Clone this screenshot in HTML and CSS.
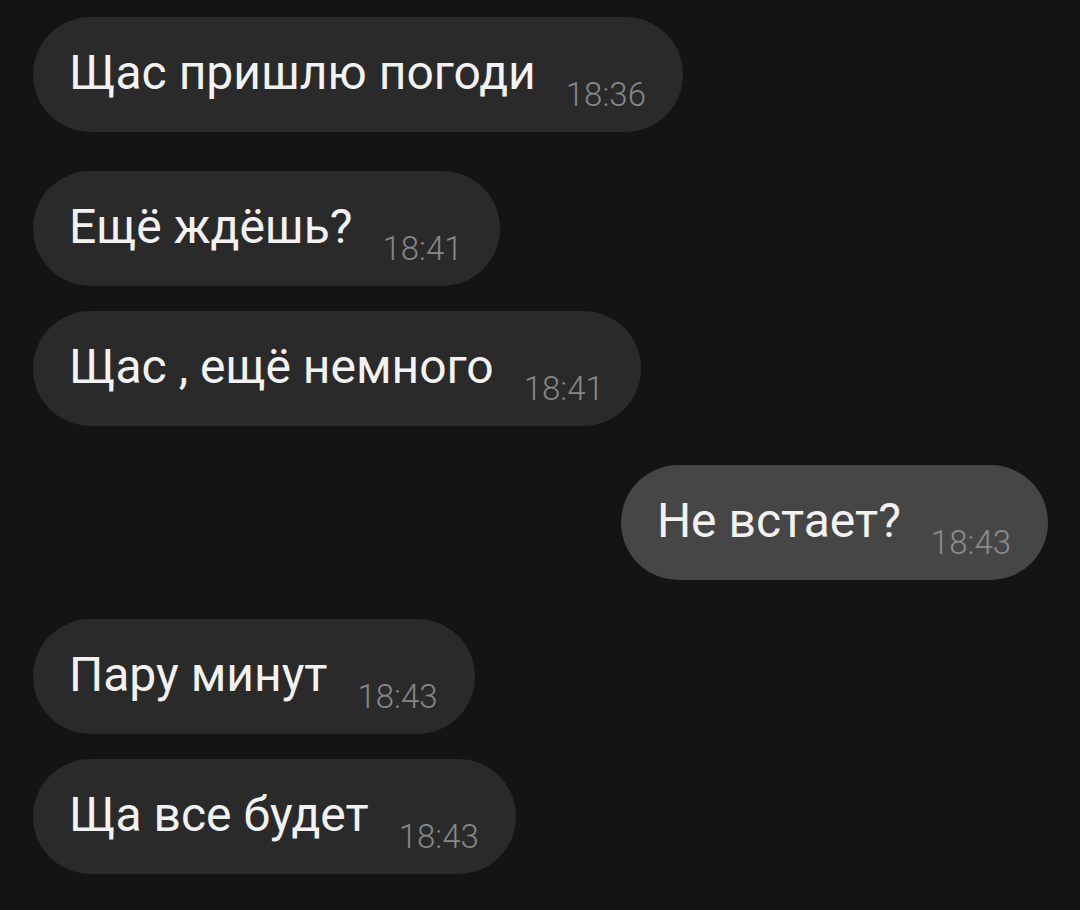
FILE: index.html
```html
<!DOCTYPE html>
<html lang="ru">
<head>
    <meta charset="UTF-8">
    <meta name="viewport" content="width=device-width, initial-scale=1.0">
    <title>Чат</title>
    <link rel="stylesheet" href="styles.css">
</head>
<body>
    <div class="chat">
        <div class="msg in">
            <span class="text">Щас пришлю погоди</span>
            <span class="time">18:36</span>
        </div>
        <div class="msg in group">
            <span class="text">Ещё ждёшь?</span>
            <span class="time">18:41</span>
        </div>
        <div class="msg in same">
            <span class="text">Щас , ещё немного</span>
            <span class="time">18:41</span>
        </div>
        <div class="msg out group">
            <span class="text">Не встает?</span>
            <span class="time">18:43</span>
        </div>
        <div class="msg in group">
            <span class="text">Пару минут</span>
            <span class="time">18:43</span>
        </div>
        <div class="msg in same">
            <span class="text">Ща все будет</span>
            <span class="time">18:43</span>
        </div>
    </div>
</body>
</html>
```

FILE: styles.css
```css
body {
    background-color: #141414;
    font-family: Roboto, 'Noto Sans', sans-serif;
    margin: 0;
    height: 910px;
    overflow: hidden;
}

.chat {
    display: flex;
    flex-direction: column;
    align-items: flex-start;
    padding: 17px 32px 0 33px;
}

.msg {
    display: flex;
    align-items: flex-end;
    gap: 30px;
    padding: 28px 37px 21px 36px;
    border-radius: 58px;
    background-color: #2a2a2a;
}

.msg.group {
    margin-top: 39px;
}

.msg.same {
    margin-top: 25px;
}

.msg.out {
    align-self: flex-end;
    background-color: #464646;
}

.text {
    color: #f2f2f2;
    font-size: 48px;
    line-height: 56px;
    margin-bottom: 10px;
    white-space: nowrap;
}

.time {
    color: #878787;
    font-size: 33px;
    line-height: 32px;
    font-weight: 300;
}

.out .time {
    color: #8c8c8c;
}
```
